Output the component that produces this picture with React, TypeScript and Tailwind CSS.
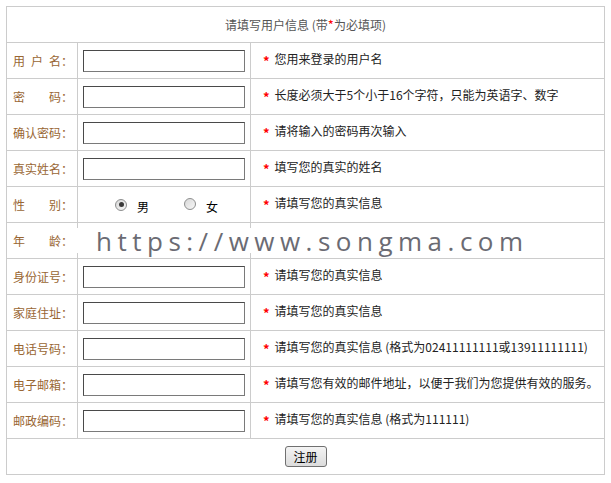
import type { ReactNode } from "react";

interface FieldRow {
  label: ReactNode;
  hint: string;
  kind?: "input" | "gender" | "none";
}

const rows: FieldRow[] = [
  {
    label: (
      <>
        <span className="tracking-[6px]">用户</span>名：
      </>
    ),
    hint: "您用来登录的用户名",
  },
  {
    label: "密　　码：",
    hint: "长度必须大于5个小于16个字符，只能为英语字、数字",
  },
  { label: "确认密码：", hint: "请将输入的密码再次输入" },
  { label: "真实姓名：", hint: "填写您的真实的姓名" },
  { label: "性　　别：", hint: "请填写您的真实信息", kind: "gender" },
  { label: "年　　龄：", hint: "", kind: "none" },
  { label: "身份证号：", hint: "请填写您的真实信息" },
  { label: "家庭住址：", hint: "请填写您的真实信息" },
  {
    label: "电话号码：",
    hint: "请填写您的真实信息 (格式为02411111111或13911111111)",
  },
  {
    label: "电子邮箱：",
    hint: "请填写您有效的邮件地址，以便于我们为您提供有效的服务。",
  },
  { label: "邮政编码：", hint: "请填写您的真实信息 (格式为111111)" },
];

function Radio({ checked }: { checked?: boolean }) {
  return (
    <span className="inline-flex h-[12px] w-[12px] items-center justify-center rounded-full border border-[#8e8f8f] bg-gradient-to-br from-[#d8d8d8] to-[#f7f7f7]">
      {checked && (
        <span className="h-[5px] w-[5px] rounded-full bg-[#3a3a3a]" />
      )}
    </span>
  );
}

function GenderPicker() {
  return (
    <div className="flex items-center pl-[32px] text-[12px] text-black">
      <Radio checked />
      <span className="ml-[10px] mt-[4px]">男</span>
      <span className="ml-[35px]">
        <Radio />
      </span>
      <span className="ml-[10px] mt-[4px]">女</span>
    </div>
  );
}

function TextBox() {
  return (
    <input
      type="text"
      className="block h-[22px] w-[162px] border border-t-[#4a4a4a] border-l-[#4a4a4a] border-r-[#7a7a7a] border-b-[#7a7a7a] bg-white outline-none"
    />
  );
}

export default function App() {
  return (
    <div
      className="relative min-h-screen bg-white pl-[6px] pt-[6px]"
      style={{ fontFamily: '"Noto Sans CJK SC", "Liberation Sans", sans-serif' }}
    >
      <table className="w-[598px] table-fixed border-collapse text-[12px]">
        <colgroup>
          <col className="w-[71px]" />
          <col className="w-[173px]" />
          <col className="w-[354px]" />
        </colgroup>
        <thead>
          <tr>
            <td
              colSpan={3}
              className="h-[36px] border border-[#cccccc] text-center align-middle text-[#555555]"
            >
              请填写用户信息 (带<span className="text-[13px] text-[#ff0000]">*</span>为必填项)
            </td>
          </tr>
        </thead>
        <tbody>
          {rows.map((row, i) => (
            <tr key={i}>
              <td className="h-[36px] whitespace-nowrap border border-[#cccccc] pl-[6px] align-middle text-[#996633]">
                {row.label}
              </td>
              <td className="h-[36px] border border-[#cccccc] pl-[5px] align-middle">
                {row.kind === "gender" ? (
                  <GenderPicker />
                ) : row.kind === "none" ? null : (
                  <TextBox />
                )}
              </td>
              <td className="h-[36px] whitespace-nowrap border border-[#cccccc] pl-[12px] align-middle text-[#222222]">
                {row.hint && (
                  <>
                    <span className="mr-[5px] inline-block align-[-2px] text-[13px] font-bold text-[#ff0000]">
                      *
                    </span>
                    {row.hint}
                  </>
                )}
              </td>
            </tr>
          ))}
          <tr>
            <td
              colSpan={3}
              className="h-[36px] border border-[#cccccc] text-center align-middle"
            >
              <button
                type="button"
                className="h-[21px] w-[42px] rounded-[3px] border border-[#707070] bg-gradient-to-b from-[#f4f4f4] to-[#dcdcdc] text-[12px] leading-none text-black"
              >
                注册
              </button>
            </td>
          </tr>
        </tbody>
      </table>

      {/* watermark lying over the age row */}
      <div className="absolute left-[75px] top-[228px] flex h-[25px] w-[460px] items-center bg-white pl-[21px]">
        <span
          className="text-[26px] leading-none tracking-[5.5px] text-[#6b6b73]"
          style={{ fontFamily: '"Open Sans", sans-serif' }}
        >
          https://www.songma.com
        </span>
      </div>
    </div>
  );
}
